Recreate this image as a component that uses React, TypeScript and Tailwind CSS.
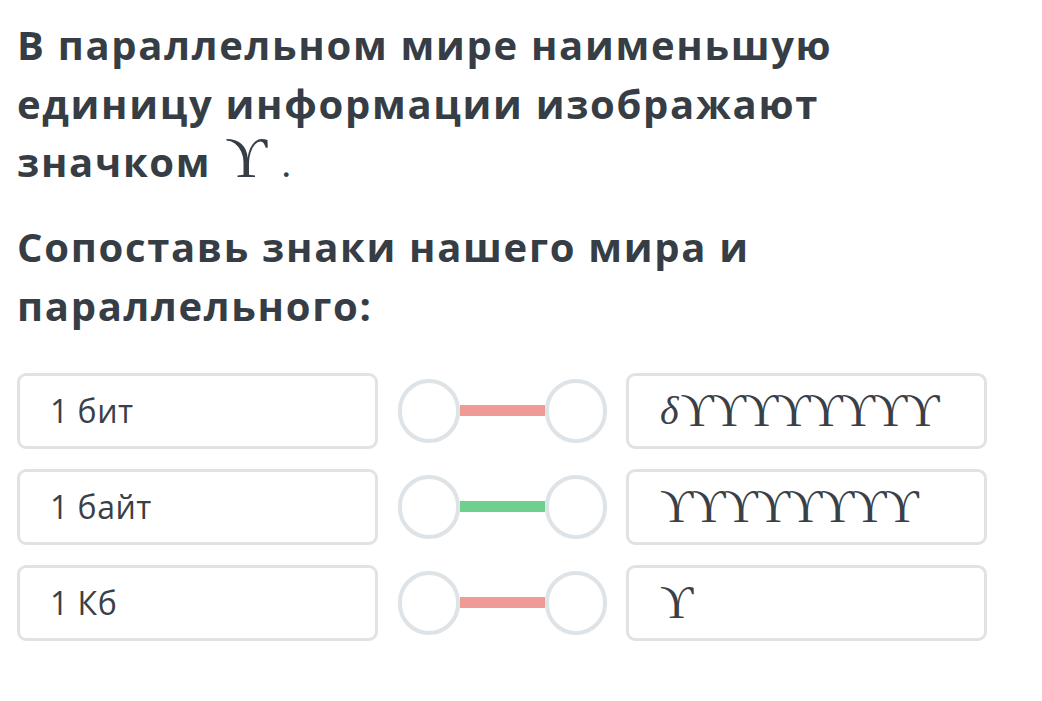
import React from "react";

type Pair = { left: string; right: string; line: "red" | "green"; delta?: boolean };

const pairs: Pair[] = [
  { left: "1 бит", right: "ϒϒϒϒϒϒϒϒ", line: "red", delta: true },
  { left: "1 байт", right: "ϒϒϒϒϒϒϒϒ", line: "green" },
  { left: "1 Кб", right: "ϒ", line: "red" },
];

const Connector = ({ line }: { line: "red" | "green" }) => (
  <div className="flex items-center justify-center">
    <div className="w-[62px] h-[64px] rounded-full border-[4px] border-[#dde3e6]" />
    <div className={`w-[85px] h-[11px] ${line === "green" ? "bg-[#6dd08f]" : "bg-[#ef9a94]"}`} />
    <div className="w-[62px] h-[64px] rounded-full border-[4px] border-[#dde3e6]" />
  </div>
);

export default function App() {
  return (
    <div className="min-h-screen bg-white pl-[17px] pt-[16px] text-[#363d45] font-['Open_Sans',sans-serif]">
      <h1 className="text-[40px] font-bold leading-[58.5px] tracking-[1.7px] w-[1000px]">
        В параллельном мире наименьшую
        <br />
        единицу информации изображают
        <br />
        значком
        <span className="ml-[14px] font-['Liberation_Serif',serif] font-normal text-[58px] leading-[0] tracking-normal">ϒ</span>
        <span className="ml-[14px] font-['Liberation_Serif',serif] font-normal">.</span>
      </h1>
      <h2 className="mt-[23px] text-[40px] font-bold leading-[59px] tracking-[1.7px]">
        Сопоставь знаки нашего мира и
        <br />
        параллельного:
      </h2>

      <div className="mt-[38px] flex flex-col gap-[20px] w-[970px]">
        {pairs.map((p, i) => (
          <div key={i} className="grid grid-cols-[361px_248px_361px] h-[76px]">
            <div className="border-[3px] border-[#e0e3e5] rounded-[9px] flex items-center pl-[30px] text-[32px] tracking-[0.5px] text-[#3a4047]">
              {p.left}
            </div>
            <Connector line={p.line} />
            <div className="border-[3px] border-[#e0e3e5] rounded-[9px] flex items-center pl-[31px] text-[46px] leading-none text-[#3a4047] font-['Liberation_Serif',serif]">
              {p.delta && <span className="italic text-[40px] mr-[2px]">δ</span>}
              <span className="tracking-[-1px]">{p.right}</span>
            </div>
          </div>
        ))}
      </div>
    </div>
  );
}
